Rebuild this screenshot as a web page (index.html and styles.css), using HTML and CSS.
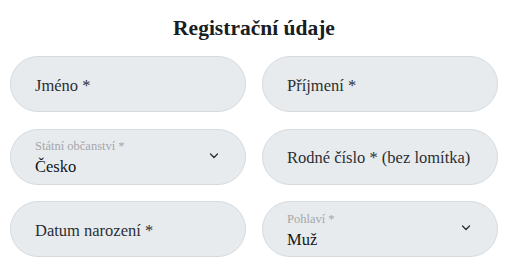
FILE: index.html
```html
<!DOCTYPE html>
<html lang="cs">
<head>
<meta charset="utf-8">
<link rel="stylesheet" href="styles.css">
</head>
<body>
<section class="form">
  <h2 class="title">Registrační údaje</h2>
  <div class="grid">
    <div class="field"><span class="placeholder">Jméno *</span></div>
    <div class="field"><span class="placeholder">Příjmení *</span></div>
    <div class="field select">
      <div class="stack">
        <span class="label">Státní občanství *</span>
        <span class="value">Česko</span>
      </div>
      <svg class="chev" width="10" height="6" viewBox="0 0 10 6"><path d="M1.5 1 L5 4.5 L8.5 1" fill="none" stroke="#2a2f33" stroke-width="1.3" stroke-linecap="round" stroke-linejoin="round"/></svg>
    </div>
    <div class="field"><span class="placeholder">Rodné číslo * (bez lomítka)</span></div>
    <div class="field"><span class="placeholder">Datum narození *</span></div>
    <div class="field select">
      <div class="stack">
        <span class="label">Pohlaví *</span>
        <span class="value">Muž</span>
      </div>
      <svg class="chev" width="10" height="6" viewBox="0 0 10 6"><path d="M1.5 1 L5 4.5 L8.5 1" fill="none" stroke="#2a2f33" stroke-width="1.3" stroke-linecap="round" stroke-linejoin="round"/></svg>
    </div>
  </div>
</section>
</body>
</html>
```
FILE: styles.css
```css
html, body {
  margin: 0;
  padding: 0;
  background: #ffffff;
}
body {
  font-family: "Liberation Serif", "DejaVu Serif", serif;
}
.form {
  width: 488px;
  padding: 14px 0 0 10px;
}
.title {
  margin: 0 0 14px 0;
  text-align: center;
  font-size: 21.5px;
  line-height: 28px;
  font-weight: bold;
  color: #17201f;
}
.grid {
  display: grid;
  grid-template-columns: 236px 236px;
  column-gap: 16px;
  row-gap: 16.5px;
}
.field {
  box-sizing: border-box;
  height: 56px;
  border: 1px solid #d6dadf;
  border-radius: 28px;
  background: #e8ebee;
  display: flex;
  align-items: center;
  padding: 3px 24px 0 24px;
}
.placeholder {
  font-size: 16.5px;
  color: #2b2f33;
}
.select {
  justify-content: space-between;
  padding-top: 0;
}
.stack {
  display: flex;
  flex-direction: column;
  gap: 2px;
  padding-top: 3px;
}
.label {
  font-size: 12.5px;
  line-height: 16px;
  color: #a3a7ab;
}
.value {
  font-size: 16.5px;
  line-height: 22px;
  color: #121517;
}
.chev {
  margin-right: 2px;
  margin-top: -2px;
}
```
